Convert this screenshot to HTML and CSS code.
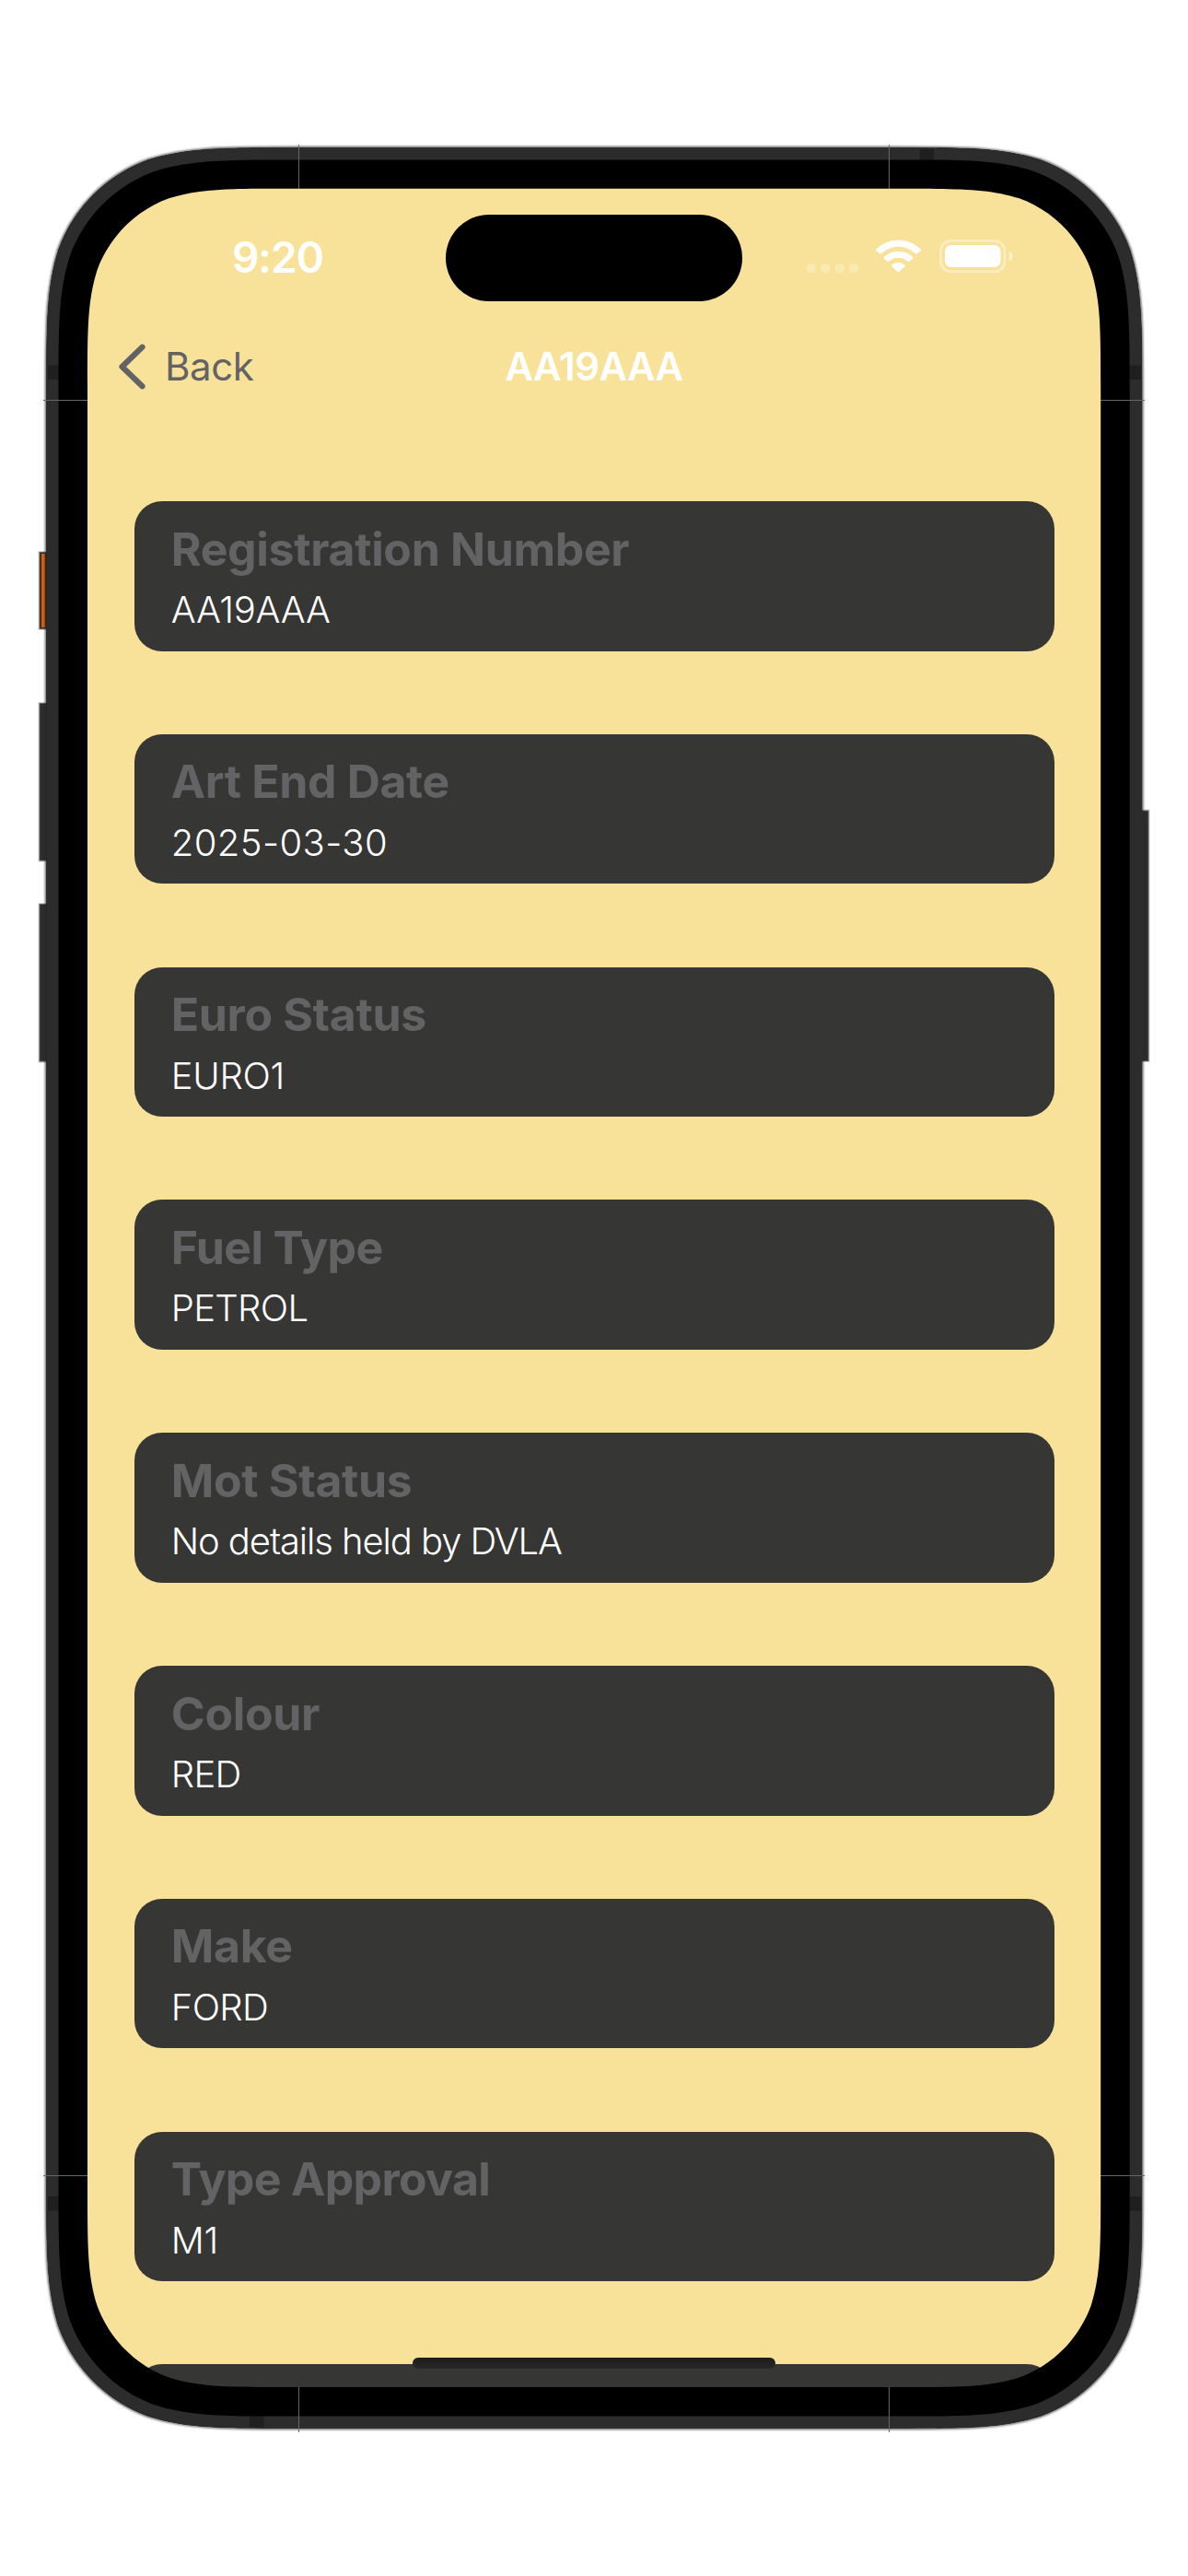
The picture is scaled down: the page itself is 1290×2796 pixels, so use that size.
FILE: index.html
```html
<!DOCTYPE html>
<html lang="en">
<head>
<meta charset="utf-8">
<title>AA19AAA</title>
<link rel="stylesheet" href="styles.css">
</head>
<body>
<div class="phone">
  <main class="screen">
    <header class="status">
      <span class="time">9:20</span>
      <span class="island"></span>
      <svg class="indicators" width="220" height="36" viewBox="0 0 220 36" fill="#fff">
        <g opacity=".25">
          <rect x="0" y="26.4" width="9.8" height="9.6" rx="4"/>
          <rect x="15.4" y="26.4" width="9.8" height="9.6" rx="4"/>
          <rect x="30.8" y="26.4" width="9.8" height="9.6" rx="4"/>
          <rect x="46.3" y="26.4" width="9.8" height="9.6" rx="4"/>
        </g>
        <path d="M75.6 10.2A34 34 0 0 1 123.4 10.2Q124.6 11.4 123.4 12.5L119.8 15.3Q118.8 16 117.8 15.1A26.5 26.5 0 0 0 81.2 15.1Q80.2 16 79.2 15.3L75.6 12.5Q74.4 11.4 75.6 10.2Z"/>
        <path d="M84.1 18.8A22.5 22.5 0 0 1 114.9 18.8Q116 20 114.9 21L111.5 23.7Q110.5 24.3 109.5 23.5A15 15 0 0 0 89.5 23.5Q88.5 24.3 87.5 23.7L84.1 21Q83 20 84.1 18.8Z"/>
        <path d="M92.7 27.3A10.5 10.5 0 0 1 106.3 27.3Q107.3 28.3 106.4 29.2L100.4 35Q99.5 35.8 98.6 35L92.6 29.2Q91.7 28.3 92.7 27.3Z"/>
        <rect x="145.5" y="1.3" width="69.4" height="33.4" rx="11" fill="none" stroke="#fff" stroke-width="2.6" opacity=".4"/>
        <rect x="150" y="6" width="60.6" height="24" rx="7"/>
        <path d="M219.6 12.5Q223.5 14.5 223.5 18T219.6 23.5Z" opacity=".5"/>
      </svg>
    </header>
    <nav class="nav">
      <a class="back">
        <svg width="30" height="50" viewBox="0 0 30 50" fill="none" stroke="#636366" stroke-width="6.2" stroke-linecap="round" stroke-linejoin="round"><path d="M26.5 3.7L4.5 25L26.5 46.3"/></svg>
        <span>Back</span>
      </a>
      <h1 class="title">AA19AAA</h1>
    </nav>
    <section class="list">
      <article class="card"><h2>Registration Number</h2><p>AA19AAA</p></article>
      <article class="card"><h2>Art End Date</h2><p class="date">2025-03-30</p></article>
      <article class="card"><h2>Euro Status</h2><p>EURO1</p></article>
      <article class="card"><h2 class="snug">Fuel Type</h2><p class="caps">PETROL</p></article>
      <article class="card"><h2>Mot Status</h2><p class="sentence">No details held by DVLA</p></article>
      <article class="card"><h2>Colour</h2><p class="caps">RED</p></article>
      <article class="card"><h2>Make</h2><p class="caps">FORD</p></article>
      <article class="card"><h2 class="snug">Type Approval</h2><p>M1</p></article>
      <article class="card"></article>
    </section>
    <span class="home"></span>
  </main>
  <svg class="shell" width="1290" height="2796" viewBox="0 0 1290 2796">
    <defs>
      <path id="outer" d="M318 160.5H972.5c77 0 115.5 0 157 13.1c45.3 16.5 80.9 52.1 97.4 97.4c13.1 41.5 13.1 80 13.1 157V2368c0 77 0 115.5-13.1 157c-16.5 45.3-52.1 80.9-97.4 97.4c-41.5 13.1-80 13.1-157 13.1H318c-77 0-115.5 0-157-13.1c-45.3-16.5-80.9-52.1-97.4-97.4c-13.1-41.5-13.1-80-13.1-157V428c0-77 0-115.5 13.1-157c16.5-45.3 52.1-80.9 97.4-97.4c41.5-13.1 80-13.1 157-13.1Z"/>
      <path id="bezel" d="M315.7 173.5H974.5c72.6 0 108.9 0 148 12.4c42.7 15.5 76.3 49.1 91.8 91.8c12.4 39.1 12.4 75.4 12.4 148V2370.4c0 72.6 0 108.9-12.4 148c-15.5 42.7-49.1 76.3-91.8 91.8c-39.1 12.4-75.4 12.4-148 12.4H315.7c-72.6 0-108.9 0-148-12.4c-42.7-15.5-76.3-49.1-91.8-91.8c-12.4-39.1-12.4-75.4-12.4-148V425.7c0-72.6 0-108.9 12.4-148c15.5-42.7 49.1-76.3 91.8-91.8c39.1-12.4 75.4-12.4 148-12.4Z"/>
      <path id="glass" d="M309 204.8H981.2c61.6 0 92.4 0 125.6 10.5c36.2 13.2 64.7 41.7 77.9 77.9c10.5 33.2 10.5 64 10.5 125.6V2377c0 61.6 0 92.4-10.5 125.6c-13.2 36.2-41.7 64.7-77.9 77.9c-33.2 10.5-64 10.5-125.6 10.5H309c-61.6 0-92.4 0-125.6-10.5c-36.2-13.2-64.7-41.7-77.9-77.9c-10.5-33.2-10.5-64-10.5-125.6V418.8c0-61.6 0-92.4 10.5-125.6c13.2-36.2 41.7-64.7 77.9-77.9c33.2-10.5 64-10.5 125.6-10.5Z"/>
      <mask id="cutout"><rect width="1290" height="2796" fill="#fff"/><use href="#glass" fill="#000"/></mask>
    </defs>
    <g mask="url(#cutout)">
      <g fill="#2c2c2c" stroke="#999" stroke-opacity=".45" stroke-width="2">
        <rect x="42.5" y="599" width="10" height="84"/>
        <rect x="42.5" y="763" width="10" height="171.5"/>
        <rect x="42.5" y="981" width="10" height="171.5"/>
        <rect x="1238" y="879.5" width="9.5" height="272.5"/>
      </g>
      <use href="#outer" stroke="#2c2c2c" stroke-opacity=".1" stroke-width="7"/>
      <use href="#outer" stroke="#2c2c2c" stroke-opacity=".3" stroke-width="4.4"/>
      <use href="#outer" fill="#2c2c2c" stroke="#2c2c2c" stroke-opacity=".4" stroke-width="2"/>
      <rect x="45" y="601" width="3.6" height="80" fill="#e05a00"/>
      <g fill="#1f1f1f">
        <rect x="998.7" y="162" width="15.3" height="14"/>
        <rect x="271" y="2620" width="15.5" height="14.5"/>
        <rect x="52" y="396.5" width="14" height="15.5"/>
        <rect x="1224" y="396.5" width="15" height="15.5"/>
        <rect x="52" y="2384" width="14" height="15.5"/>
        <rect x="1224" y="2384" width="15" height="15.5"/>
      </g>
      <use href="#bezel"/>
      <path fill="#666" d="M324 157h1v48h-1zM965 157h1v48h-1zM324 2591h1v49h-1zM965 2591h1v49h-1zM47 434h48v1h-48zM1195 434h48v1h-48zM47 2361h48v1h-48zM1195 2361h48v1h-48z"/>
    </g>
  </svg>
</div>
</body>
</html>
```
FILE: styles.css
```css
* { box-sizing: border-box; margin: 0; padding: 0; }

body {
  background: #fff;
  font-family: Inter, "Liberation Sans", sans-serif;
}

.phone {
  position: relative;
  width: 1290px;
  height: 2796px;
  padding: 204px 94px;
  overflow: hidden;
}

.shell {
  position: absolute;
  inset: 0;
}

.screen {
  position: relative;
  height: 2388px;
  padding: 0 51.5px;
  overflow: hidden;
  border-radius: 130px;
  background: #f8e299;
}

.status {
  display: grid;
  grid-template-columns: 1fr 322px 1fr;
  height: 123px;
  padding-top: 29px;
}

.time {
  justify-self: center;
  padding: 18px 26.5px 0 0;
  color: #fff;
  font-size: 46px;
  font-weight: 600;
  letter-spacing: -1px;
  line-height: 56px;
}

.island {
  height: 94px;
  border-radius: 48px;
  background: #000;
}

.indicators {
  margin: 27px 0 0 70px;
  overflow: visible;
}

.nav {
  display: grid;
  grid-template-columns: 1fr auto 1fr;
  align-items: center;
  height: 142px;
  margin: 0 -18px;
  color: #636366;
  font-size: 42px;
  letter-spacing: -0.4px;
  line-height: 50px;
}

.back {
  display: flex;
  align-items: center;
  gap: 21.5px;
}

.title {
  color: #fff;
  font-size: 42px;
  font-weight: 600;
  letter-spacing: -0.6px;
}

.list {
  display: flex;
  flex-direction: column;
  gap: 90.2px;
  margin-top: 75.1px;
}

.card {
  flex: none;
  display: flex;
  flex-direction: column;
  gap: 12.5px;
  height: 162.6px;
  padding: 21.5px 40.3px;
  border-radius: 30px;
  background: #363634;
}

.card h2 {
  color: #636366;
  font-size: 50px;
  font-weight: 700;
  letter-spacing: -0.35px;
  line-height: 60px;
}

.card h2.snug { letter-spacing: -0.65px; }

.card p {
  color: #fff;
  font-size: 40px;
  font-weight: 300;
  letter-spacing: -0.3px;
  line-height: 48px;
}

.card p.date { letter-spacing: 0.4px; }
.card p.caps { letter-spacing: -0.7px; }
.card p.sentence { letter-spacing: -1.1px; }

.home {
  position: absolute;
  left: 354px;
  top: 2354.5px;
  width: 394px;
  height: 12.5px;
  border-radius: 6px;
  background: linear-gradient(#1c1c1c, #282828);
}
```
